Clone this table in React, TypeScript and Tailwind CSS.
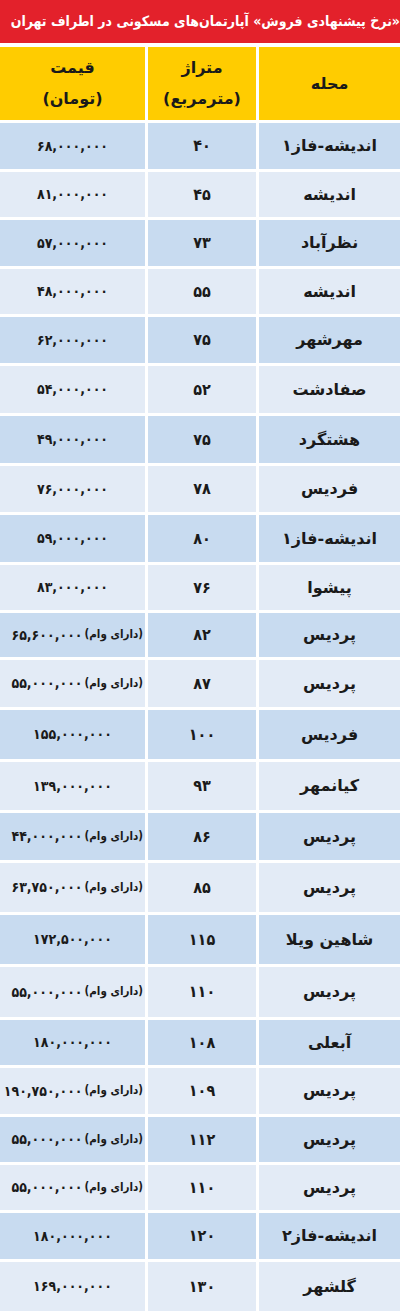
import React from "react";

type Row = {
  area: string;
  size: string;
  price: string;
  loan?: boolean;
  h: string;
};

// row heights follow the scanned table, which is not perfectly even
const rows: Row[] = [
  { area: "اندیشه-فاز۱", size: "۴۰", price: "۶۸,۰۰۰,۰۰۰", h: "h-[46px]" },
  { area: "اندیشه", size: "۴۵", price: "۸۱,۰۰۰,۰۰۰", h: "h-[45px]" },
  { area: "نظرآباد", size: "۷۳", price: "۵۷,۰۰۰,۰۰۰", h: "h-[46px]" },
  { area: "اندیشه", size: "۵۵", price: "۴۸,۰۰۰,۰۰۰", h: "h-[45px]" },
  { area: "مهرشهر", size: "۷۵", price: "۶۲,۰۰۰,۰۰۰", h: "h-[46px]" },
  { area: "صفادشت", size: "۵۲", price: "۵۴,۰۰۰,۰۰۰", h: "h-[47px]" },
  { area: "هشتگرد", size: "۷۵", price: "۴۹,۰۰۰,۰۰۰", h: "h-[47px]" },
  { area: "فردیس", size: "۷۸", price: "۷۶,۰۰۰,۰۰۰", h: "h-[46px]" },
  { area: "اندیشه-فاز۱", size: "۸۰", price: "۵۹,۰۰۰,۰۰۰", h: "h-[47px]" },
  { area: "پیشوا", size: "۷۶", price: "۸۳,۰۰۰,۰۰۰", h: "h-[45px]" },
  { area: "پردیس", size: "۸۲", price: "۶۵,۶۰۰,۰۰۰", loan: true, h: "h-[44px]" },
  { area: "پردیس", size: "۸۷", price: "۵۵,۰۰۰,۰۰۰", loan: true, h: "h-[47px]" },
  { area: "فردیس", size: "۱۰۰", price: "۱۵۵,۰۰۰,۰۰۰", h: "h-[49px]" },
  { area: "کیانمهر", size: "۹۳", price: "۱۳۹,۰۰۰,۰۰۰", h: "h-[48px]" },
  { area: "پردیس", size: "۸۶", price: "۴۴,۰۰۰,۰۰۰", loan: true, h: "h-[47px]" },
  { area: "پردیس", size: "۸۵", price: "۶۳,۷۵۰,۰۰۰", loan: true, h: "h-[49px]" },
  { area: "شاهین ویلا", size: "۱۱۵", price: "۱۷۲,۵۰۰,۰۰۰", h: "h-[49px]" },
  { area: "پردیس", size: "۱۱۰", price: "۵۵,۰۰۰,۰۰۰", loan: true, h: "h-[50px]" },
  { area: "آبعلی", size: "۱۰۸", price: "۱۸۰,۰۰۰,۰۰۰", h: "h-[45px]" },
  { area: "پردیس", size: "۱۰۹", price: "۱۹۰,۷۵۰,۰۰۰", loan: true, h: "h-[46px]" },
  { area: "پردیس", size: "۱۱۲", price: "۵۵,۰۰۰,۰۰۰", loan: true, h: "h-[45px]" },
  { area: "پردیس", size: "۱۱۰", price: "۵۵,۰۰۰,۰۰۰", loan: true, h: "h-[45px]" },
  { area: "اندیشه-فاز۲", size: "۱۲۰", price: "۱۸۰,۰۰۰,۰۰۰", h: "h-[46px]" },
  { area: "گلشهر", size: "۱۳۰", price: "۱۶۹,۰۰۰,۰۰۰", h: "h-[49px]" },
];

const App: React.FC = () => {
  return (
    <div className="w-[400px] h-[1311px] overflow-hidden bg-white font-['DejaVu_Sans',sans-serif] font-bold text-[#1a1a1a]">
      {/* title bar */}
      <div
        dir="rtl"
        className="h-[43px] bg-[#e3212b] text-white text-[14px] font-['DejaVu_Sans_Condensed','DejaVu_Sans',sans-serif] flex items-center justify-start whitespace-nowrap overflow-hidden"
      >
        «نرخ پیشنهادی فروش» آپارتمان‌های مسکونی در اطراف تهران
      </div>

      {/* header */}
      <div className="mt-[4px] grid grid-cols-[145px_108px_141px] gap-x-[3px] h-[73px] text-[16px]">
        <div dir="rtl" className="bg-[#ffcc00] flex flex-col items-center justify-center gap-[7px]">
          <span>قیمت</span>
          <span>(تومان)</span>
        </div>
        <div dir="rtl" className="bg-[#ffcc00] flex flex-col items-center justify-center gap-[7px]">
          <span>متراژ</span>
          <span>(مترمربع)</span>
        </div>
        <div dir="rtl" className="bg-[#ffcc00] flex items-center justify-center">
          <span>محله</span>
        </div>
      </div>

      {/* rows */}
      <div className="mt-[3px] flex flex-col gap-y-[3px]">
        {rows.map((r, i) => {
          const bg = i % 2 === 0 ? "bg-[#c8dbf0]" : "bg-[#e3ebf6]";
          return (
            <div key={i} className={`grid grid-cols-[145px_108px_141px] gap-x-[3px] shrink-0 ${r.h}`}>
              <div
                className={`${bg} flex items-center overflow-hidden whitespace-nowrap font-['DejaVu_Sans_Condensed','DejaVu_Sans',sans-serif] ${
                  r.loan ? "justify-end pr-[2px]" : "justify-center"
                }`}
              >
                <span dir="ltr" className="shrink-0 text-[14px] tracking-[-1px]">
                  {r.price}
                </span>
                {r.loan && (
                  <span dir="rtl" className="shrink-0 ml-[2px] text-[11.5px]">
                    (دارای وام)
                  </span>
                )}
              </div>
              <div className={`${bg} flex items-center justify-center text-[16px] font-['DejaVu_Sans_Condensed','DejaVu_Sans',sans-serif]`}>
                <span dir="ltr">{r.size}</span>
              </div>
              <div dir="rtl" className={`${bg} flex items-center justify-center text-[16px]`}>
                {r.area}
              </div>
            </div>
          );
        })}
      </div>
    </div>
  );
};

export default App;
